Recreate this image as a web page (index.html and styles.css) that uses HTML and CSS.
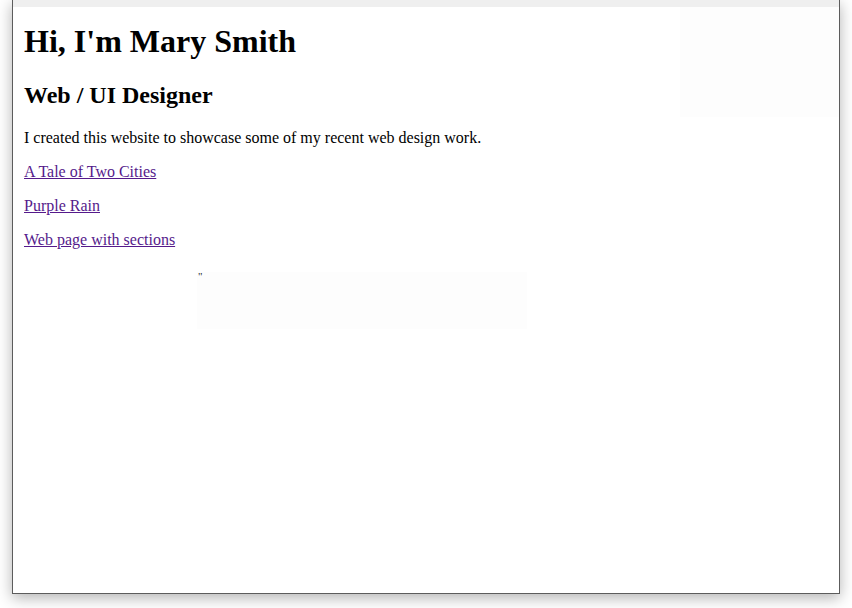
FILE: index.html
```html
<!DOCTYPE html>
<html lang="en">
<head>
<meta charset="utf-8">
<title>Mary Smith</title>
<link rel="stylesheet" href="styles.css">
</head>
<body>
<div class="screen">
  <div class="window">
    <div class="topbar"></div>
    <div class="page">
      <main class="content">
        <h1>Hi, I'm Mary Smith</h1>
        <h2>Web / UI Designer</h2>
        <p>I created this website to showcase some of my recent web design work.</p>
        <p><a href="#">A Tale of Two Cities</a></p>
        <p><a href="#">Purple Rain</a></p>
        <p><a href="#">Web page with sections</a></p>
        <div class="embed"><span class="quote">"</span></div>
      </main>
      <div class="aside"></div>
    </div>
  </div>
</div>
</body>
</html>
```

FILE: styles.css
```css
html, body {
  margin: 0;
  padding: 0;
  background: #ffffff;
}

body {
  font-family: "Liberation Serif", "Times New Roman", serif;
  color: #000;
  overflow: hidden;
}

.screen {
  padding: 0 12px;
  width: 852px;
  height: 608px;
  box-sizing: border-box;
}

.window {
  width: 828px;
  height: 594px;
  box-sizing: border-box;
  border: 1px solid #5c5c5c;
  border-top: none;
  background: #ffffff;
  box-shadow: 0 4px 14px rgba(0, 0, 0, 0.3);
  display: flex;
  flex-direction: column;
}

.topbar {
  height: 7px;
  background: #efefef;
  flex: none;
}

.page {
  display: flex;
  flex: 1;
}

.content {
  flex: 1;
  padding-left: 11px;
}

.content h1 {
  font-size: 32px;
  font-weight: bold;
  margin: 16px 0 22px;
}

.content h2 {
  font-size: 24px;
  font-weight: bold;
  margin: 20px 0;
}

.content p {
  font-size: 16px;
  margin: 16px 0;
}

.content a {
  color: #551a8b;
  text-decoration: underline;
}

.embed {
  margin: 23px 0 0 173px;
  width: 330px;
  height: 57px;
  background: #fdfdfd;
  font-size: 11px;
  line-height: 9px;
}

.quote {
  color: #2a2a2a;
  padding-left: 1px;
}

.aside {
  width: 159px;
  height: 110px;
  background: #fdfdfd;
  flex: none;
}
```
